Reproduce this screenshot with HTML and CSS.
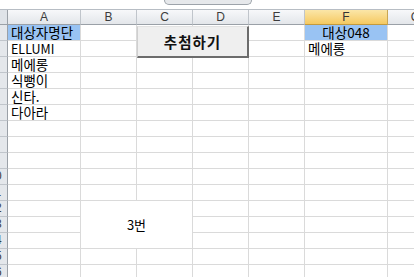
FILE: index.html
```html
<!DOCTYPE html>
<html lang="ko">
<head>
	<meta charset="UTF-8">
	<title>추첨</title>
	<link rel="stylesheet" href="styles.css">
</head>
<body>
	<div class="sheet">
		<div class="topbar"><span class="tab"></span></div>
		<div class="grid">
			<div class="corner"></div>
			<div class="ch">A</div><div class="ch">B</div><div class="ch">C</div><div class="ch">D</div><div class="ch">E</div><div class="ch active">F</div><div class="ch">G</div>

			<div class="rh"><span>1</span></div><div class="c fill">대상자명단</div><div class="c"></div><div class="c"></div><div class="c"></div><div class="c"></div><div class="c fill mid">대상048</div><div class="c"></div>
			<div class="rh"><span>2</span></div><div class="c latin">ELLUMI</div><div class="c"></div><div class="c"></div><div class="c"></div><div class="c"></div><div class="c">메에롱</div><div class="c"></div>
			<div class="rh"><span>3</span></div><div class="c">메에롱</div><div class="c"></div><div class="c"></div><div class="c"></div><div class="c"></div><div class="c"></div><div class="c"></div>
			<div class="rh"><span>4</span></div><div class="c">식뻥이</div><div class="c"></div><div class="c"></div><div class="c"></div><div class="c"></div><div class="c"></div><div class="c"></div>
			<div class="rh"><span>5</span></div><div class="c">신타.</div><div class="c"></div><div class="c"></div><div class="c"></div><div class="c"></div><div class="c"></div><div class="c"></div>
			<div class="rh"><span>6</span></div><div class="c">다아라</div><div class="c"></div><div class="c"></div><div class="c"></div><div class="c"></div><div class="c"></div><div class="c"></div>
			<div class="rh"><span>7</span></div><div class="c"></div><div class="c"></div><div class="c"></div><div class="c"></div><div class="c"></div><div class="c"></div><div class="c"></div>
			<div class="rh"><span>8</span></div><div class="c"></div><div class="c"></div><div class="c"></div><div class="c"></div><div class="c"></div><div class="c"></div><div class="c"></div>
			<div class="rh"><span>9</span></div><div class="c"></div><div class="c"></div><div class="c"></div><div class="c"></div><div class="c"></div><div class="c"></div><div class="c"></div>
			<div class="rh"><span>10</span></div><div class="c"></div><div class="c"></div><div class="c"></div><div class="c"></div><div class="c"></div><div class="c"></div><div class="c"></div>
			<div class="rh"><span>11</span></div><div class="c"></div><div class="c"></div><div class="c"></div><div class="c"></div><div class="c"></div><div class="c"></div><div class="c"></div>
			<div class="rh"><span>12</span></div><div class="c"></div><div class="c merged">3번</div><div class="c"></div><div class="c"></div><div class="c"></div><div class="c"></div>
			<div class="rh"><span>13</span></div><div class="c"></div><div class="c"></div><div class="c"></div><div class="c"></div><div class="c"></div>
			<div class="rh"><span>14</span></div><div class="c"></div><div class="c"></div><div class="c"></div><div class="c"></div><div class="c"></div>
			<div class="rh"><span>15</span></div><div class="c"></div><div class="c"></div><div class="c"></div><div class="c"></div><div class="c"></div><div class="c"></div><div class="c"></div>
			<div class="rh"><span>16</span></div><div class="c"></div><div class="c"></div><div class="c"></div><div class="c"></div><div class="c"></div><div class="c"></div><div class="c"></div>
		</div>
		<!-- 도형 버튼: 셀 위에 떠 있음 -->
		<button class="draw-btn">추첨하기</button>
	</div>
</body>
</html>
```

FILE: styles.css
```css
*{
	margin:0;
	padding:0;
	box-sizing:border-box;
}
html, body{
	width:100%;
	height:100%;
	overflow:hidden;
	background:#fff;
}
.sheet{
	position:relative;
	width:414px;
	height:277px;
	overflow:hidden;
	font-family:"Noto Sans CJK KR", "Liberation Sans", sans-serif;
	font-size:13.5px;
	color:#000;
}
.topbar{
	display:flex;
	height:10px;
	padding-left:164px;
	background:#fff;
	border-bottom:1px solid #b7bdc4;
}
.tab{
	display:block;
	width:88px;
	height:5px;
	background:#e6e8eb;
	border:1px solid #9da3aa;
	border-top:none;
	border-radius:0 0 6px 6px;
}
.grid{
	display:grid;
	grid-template-columns:8px 73px 56px 56px 56px 56px 83px 56px;
	grid-auto-rows:16px;
	grid-template-rows:15px;
	width:444px;
}
.corner{
	background:#dfe3e8;
	border-right:1px solid #9aa0a7;
	border-bottom:1px solid #9aa0a7;
}
.ch{
	display:flex;
	align-items:center;
	justify-content:center;
	font-family:"Liberation Sans", sans-serif;
	font-size:12px;
	color:#3c3c3c;
	background:linear-gradient(#f7f8fa, #e3e6ea);
	border-right:1px solid #c0c5cb;
	border-bottom:1px solid #9aa0a7;
}
.ch.active{
	background:linear-gradient(#fbe6a8, #f5c961);
	border-right:1px solid #c9a654;
	border-bottom:1px solid #c29a3f;
	color:#333;
}
.rh{
	overflow:hidden;
	background:#e4e7eb;
	border-right:1px solid #9aa0a7;
	border-bottom:1px solid #c0c5cb;
	font-family:"Liberation Sans", sans-serif;
	font-size:12px;
	line-height:15px;
	color:#3c3c3c;
}
.rh span{
	display:block;
	width:26px;
	margin-left:-18px;
	text-align:center;
}
.c{
	padding-left:3px;
	line-height:15px;
	white-space:nowrap;
	border-right:1px solid #dadada;
	border-bottom:1px solid #dadada;
}
.c.latin{
	font-size:12.5px;
	padding-left:3px;
}
.c.fill{
	background:#99c3f3;
}
.c.mid{
	text-align:center;
	padding-left:0;
}
.c.merged{
	grid-column:span 2;
	grid-row:span 3;
	display:flex;
	align-items:center;
	justify-content:center;
	padding:0;
	font-size:13px;
}
.draw-btn{
	position:absolute;
	left:137px;
	top:26px;
	width:112px;
	height:32px;
	background:#efefef;
	border:none;
	border-left:1px solid #cfcfcf;
	border-top:1px solid #e2e2e2;
	border-right:2px solid #6c6c6c;
	border-bottom:2px solid #6c6c6c;
	font-family:"Noto Sans CJK KR", sans-serif;
	font-size:14.5px;
	font-weight:bold;
	color:#111;
	letter-spacing:1px;
}
```
